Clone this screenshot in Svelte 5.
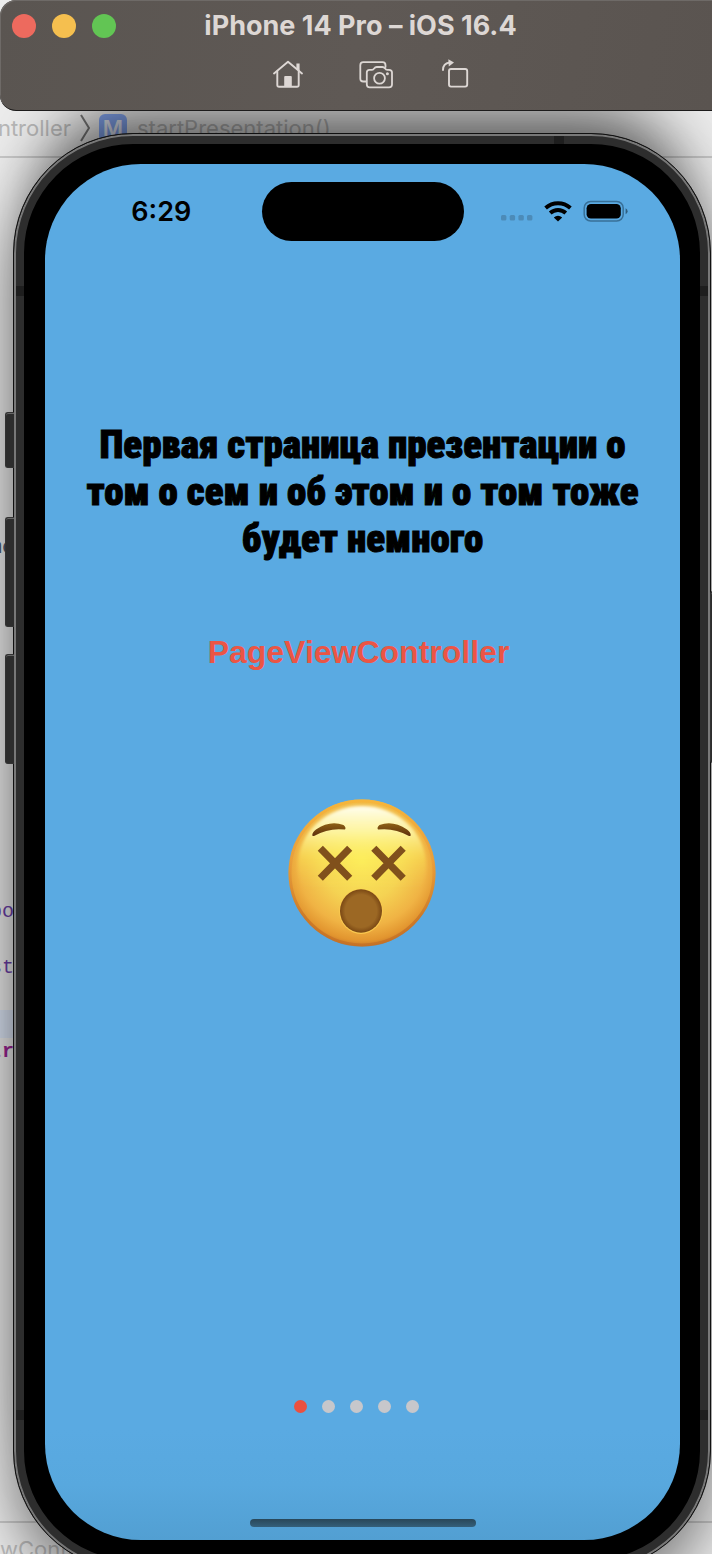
<script>
  const code = ['name', '', '', '', '', '', '', '', '', '', '', '', '', 'po', '', 'st', '', '', 'tr'];
  const kinds = { 0: 'plain', 13: 'type', 15: 'type', 17: 'current', 18: 'keyword' };
  let page = $state(0);
  const pages = [1, 2, 3, 4, 5];
</script>

<div class="desktop">
  <div class="editor" aria-hidden="true">
    <div class="pathbar">
      <span>ntroller</span>
      <svg width="10" height="28" viewBox="0 0 10 28"><path d="M1 1 L9 14 L1 27" fill="none" stroke="#777" stroke-width="2" /></svg>
      <span class="method">M</span>
      <span>startPresentation()</span>
    </div>
    <div class="code">
      {#each code as line, i}
        <div class="line {kinds[i] ?? ''}">{line}</div>
      {/each}
    </div>
    <div class="footer">wController</div>
  </div>

  <header class="titlebar">
    <div class="title-row">
      <div class="lights">
        <button class="red" aria-label="Close"></button>
        <button class="yellow" aria-label="Minimize"></button>
        <button class="green" aria-label="Zoom"></button>
      </div>
      <h1>iPhone 14 Pro – iOS 16.4</h1>
    </div>
    <nav class="tools">
      <button aria-label="Home">
        <svg width="34" height="34" viewBox="0 0 34 34" fill="none" stroke="#ddd7d4" stroke-width="1.9" stroke-linejoin="round" stroke-linecap="round">
          <path d="M3 16.5 L17 4.8 L31 16.5" />
          <path d="M6.3 14.5 V28 Q6.3 29.8 8.1 29.8 H25.9 Q27.7 29.8 27.7 28 V14.5" />
          <path d="M25.4 6.5 H28.6 V14 L25.4 11.4 Z" fill="#ddd7d4" stroke="none" />
          <path d="M13.2 30 V20 Q13.2 19 14.2 19 H19.8 Q20.8 19 20.8 20 V30 Z" fill="#ddd7d4" stroke="none" />
        </svg>
      </button>
      <button aria-label="Screenshot">
        <svg width="34" height="34" viewBox="0 0 34 34" fill="none" stroke="#ddd7d4" stroke-width="1.8" stroke-linejoin="round" stroke-linecap="round">
          <path d="M7 24.5 H4.3 Q1.3 24.5 1.3 21.5 V8.2 Q1.3 5.2 4.3 5.2 H23.5 Q26.5 5.2 26.5 8.2 V10" />
          <path d="M10.5 12.8 H13 Q14.4 12.8 15.2 11.4 Q16.1 10 17.8 10 H23.4 Q25 10 26 11.4 Q26.8 12.8 28.3 12.8 H30 Q33 12.8 33 15.6 V27.6 Q33 30.4 30 30.4 H10.7 Q7.8 30.4 7.8 27.6 V15.6 Q7.8 12.8 10.5 12.8 Z" />
          <circle cx="20.5" cy="21.2" r="5.4" />
          <circle cx="28.4" cy="16.8" r="1.5" fill="#ddd7d4" stroke="none" />
        </svg>
      </button>
      <button class="rotate" aria-label="Rotate">
        <svg width="34" height="34" viewBox="0 0 34 34" fill="none" stroke="#ddd7d4" stroke-width="1.9" stroke-linejoin="round" stroke-linecap="round">
          <rect x="10" y="12" width="18.2" height="17.6" rx="2" />
          <path d="M4 13 Q4 6.5 10.5 5.5" />
          <path d="M9.3 2.2 L15 5.5 L9.8 9.5 Z" fill="#ddd7d4" stroke="none" />
        </svg>
      </button>
    </nav>
  </header>

  <main class="device">
    <span class="key mute"></span>
    <span class="key up"></span>
    <span class="key down"></span>
    <span class="key power"></span>
    <span class="band top"></span>
    <span class="band left high"></span>
    <span class="band right high"></span>
    <span class="band left low"></span>
    <span class="band right low"></span>

    <div class="screen">
      <div class="status">
        <time>6:29</time>
        <span class="island"></span>
        <div class="signals">
          <svg width="32" height="24" viewBox="0 0 32 24" fill="#4c8bb8">
            <rect x="0" y="15" width="5.4" height="5.4" rx="1.5" />
            <rect x="8.7" y="15" width="5.4" height="5.4" rx="1.5" />
            <rect x="17.4" y="15" width="5.4" height="5.4" rx="1.5" />
            <rect x="26" y="15" width="5.4" height="5.4" rx="1.5" />
          </svg>
          <svg width="28" height="24" viewBox="0 0 28 24">
            <g fill="none" stroke="#000" stroke-width="3.9">
              <path d="M1.6 8 A18.5 18.5 0 0 1 26.4 8" />
              <path d="M6.2 13 A11.5 11.5 0 0 1 21.8 13" />
            </g>
            <path d="M14 21.6 L9.8 17.4 Q14 14 18.2 17.4 Z" />
          </svg>
          <svg width="46" height="24" viewBox="0 0 46 24">
            <rect x="1.2" y="1.5" width="39" height="19.5" rx="6.5" fill="none" stroke="#387098" stroke-width="1.5" />
            <rect x="3.6" y="3.9" width="34.2" height="14.7" rx="4.4" />
            <path d="M42.6 8.3 Q44.6 9.3 44.6 11.3 Q44.6 13.3 42.6 14.3 Z" fill="#2f5f80" />
          </svg>
        </div>
      </div>

      <section>
        <h2>Первая страница презентации о<br />том о сем и об этом и о том тоже<br />будет немного</h2>
        <p>PageViewController</p>
        <svg class="face" width="148" height="148" viewBox="0 0 148 148" role="img" aria-label="Dizzy face">
          <defs>
            <radialGradient id="base" cx=".5" cy=".42" r=".6">
              <stop offset="0" stop-color="#fbe95a" />
              <stop offset=".45" stop-color="#f5d353" />
              <stop offset=".74" stop-color="#f0b344" />
              <stop offset=".9" stop-color="#e2952f" />
              <stop offset="1" stop-color="#bd6b24" />
            </radialGradient>
            <linearGradient id="shine" x1="0" y1="0" x2="0" y2="1">
              <stop offset="0" stop-color="#fffef0" />
              <stop offset=".22" stop-color="#fffcb0" stop-opacity=".8" />
              <stop offset=".45" stop-color="#fff65c" stop-opacity=".35" />
              <stop offset=".7" stop-color="#fbe050" stop-opacity="0" />
            </linearGradient>
            <linearGradient id="rim" x1="0" y1="0" x2="0" y2="1">
              <stop offset="0" stop-color="#f6b53a" />
              <stop offset=".4" stop-color="#e8973a" stop-opacity=".5" />
              <stop offset=".8" stop-color="#c06a24" stop-opacity=".6" />
            </linearGradient>
            <radialGradient id="mouth">
              <stop offset=".75" stop-color="#9c6824" />
              <stop offset="1" stop-color="#7a4814" />
            </radialGradient>
            <linearGradient id="brow" x1="0" y1="0" x2="0" y2="1">
              <stop offset="0" stop-color="#8d6015" />
              <stop offset="1" stop-color="#5e2f0c" />
            </linearGradient>
            <filter id="soft"><feGaussianBlur stdDeviation="1.6" /></filter>
          </defs>
          <circle cx="74" cy="74" r="73.5" fill="url(#base)" />
          <circle cx="74" cy="74" r="72" fill="none" stroke="url(#rim)" stroke-width="3" />
          <ellipse cx="74" cy="66" rx="64" ry="59" fill="url(#shine)" filter="url(#soft)" />
          <g fill="url(#brow)">
            <path d="M24.3 36.5 Q24 33.5 28 30.5 Q42 21 55.5 26 Q58.5 28.5 57 30.6 Q41 28.5 26 37 Q25 37.2 24.3 36.5 Z" />
            <path d="M122.7 36.5 Q123 33.5 119 30.5 Q105 21 91.5 26 Q88.5 28.5 90 30.6 Q106 28.5 121 37 Q122 37.2 122.7 36.5 Z" />
          </g>
          <g fill="none" stroke="#80501c" stroke-width="7.2">
            <path d="M32.3 49.3 L61.7 79.2 M61.7 49.3 L32.3 79.2" />
            <path d="M85.8 49.3 L115.2 79.2 M115.2 49.3 L85.8 79.2" />
          </g>
          <ellipse cx="73" cy="112.5" rx="21.8" ry="22.4" fill="#fbc950" />
          <ellipse cx="73" cy="112" rx="21" ry="21.7" fill="url(#mouth)" />
        </svg>
      </section>

      <div class="dots">
        {#each pages as n, i}
          <button class:active={page === i} aria-label="Page {n}" onclick={() => (page = i)}></button>
        {/each}
      </div>
      <span class="home"></span>
    </div>
  </main>
</div>

<style>
  :global(body) { margin: 0; }
  button { appearance: none; border: 0; padding: 0; background: none; }
  svg { display: block; }

  .desktop {
    position: relative;
    display: flex;
    flex-direction: column;
    height: 100vh;
    overflow: hidden;
    background: #ececec;
    font-family: Inter, sans-serif;
  }

  .editor {
    position: absolute;
    inset: 0;
    display: flex;
    flex-direction: column;
    color: #b8b8b8;
    font-size: 22px;
  }
  .pathbar {
    display: flex;
    align-items: flex-end;
    gap: 9px;
    box-sizing: border-box;
    height: 158px;
    padding-bottom: 14px;
    border-bottom: 2px solid #c8c8c8;
    line-height: 28px;
  }
  .pathbar span:first-child { display: flex; justify-content: flex-end; width: 71px; }
  .method {
    width: 28px;
    margin-right: 1px;
    border-radius: 6px;
    background: #86a8f4;
    color: #e8ecf8;
    font-weight: 600;
    text-align: center;
  }
  .code {
    flex: 1;
    padding-top: 376px;
    font: 20px/28px "Liberation Mono", monospace;
  }
  .line { display: flex; justify-content: flex-end; width: 14px; height: 28px; }
  .plain { color: #4c5a70; }
  .type { color: #6c40a8; }
  .keyword { color: #9b2393; font-weight: 700; }
  .current { background: #dbe4f4; }
  .footer {
    height: 31px;
    border-top: 2px solid #c8c8c8;
    line-height: 52px;
    color: #bcbcbc;
  }

  .titlebar {
    position: relative;
    z-index: 1;
    flex: none;
    box-sizing: border-box;
    height: 111px;
    border: 1px solid #1c1b1b;
    border-width: 0 0 1px;
    border-radius: 16px 0 0 16px;
    background: linear-gradient(100deg, #5a5551, #5f5955 50%, #5a5450);
    box-shadow: inset 1px 1px 0 #6e6a67;
  }
  .title-row {
    display: grid;
    grid-template-columns: 1fr auto 1fr;
    align-items: center;
    height: 52px;
    padding: 0 0 0 12px;
  }
  .lights { display: flex; gap: 16px; }
  .lights button { width: 24px; height: 24px; border-radius: 50%; }
  .red { background: #ed6a5e; }
  .yellow { background: #f5bf4f; }
  .green { background: #62c554; }
  h1 { margin: 0 3px 0 0; color: #ddd7d4; font-size: 27px; font-weight: 700; line-height: 50px; }
  .tools { display: flex; justify-content: center; gap: 54px; padding: 5px 0 0 32px; }
  .rotate { margin-left: -8px; }

  .device {
    position: relative;
    display: flex;
    flex: none;
    box-sizing: border-box;
    height: calc(100vh - 116px);
    margin: 22px 1px 0 13px;
    padding: 30px 30px 30px 31px;
    border: 1px solid #111;
    border-radius: 120px;
    background: #000;
    box-shadow:
      inset 0 0 0 2px #787878,
      inset 0 0 0 10px #2d2d2d,
      0 24px 60px rgba(0, 0, 0, .5),
      0 -60px 60px -30px rgba(0, 0, 0, .5);
  }
  .key {
    position: absolute;
    left: -9px;
    box-sizing: border-box;
    width: 9px;
    border: 1px solid #333;
    border-right: 0;
    border-radius: 3px 0 0 3px;
    background: #2d2d2d;
    box-shadow: inset 0 1px 0 #666;
  }
  .mute { top: 278px; height: 56px; }
  .up { top: 383px; height: 110px; }
  .down { top: 520px; height: 110px; }
  .power { top: 457px; right: -9px; left: auto; height: 172px; }
  .band { position: absolute; background: #1e1e1e; }
  .band.top { top: 2px; right: 146px; width: 10px; height: 8px; }
  .band.left { left: 2px; width: 8px; height: 10px; }
  .band.right { right: 2px; width: 8px; height: 10px; }
  .high { top: 152px; }
  .low { top: 1276px; }

  .screen {
    display: flex;
    flex: 1;
    flex-direction: column;
    align-items: center;
    border-radius: 96px;
    background: linear-gradient(#5aaae2, #5aaae2 92%, #58a8de 96%, #529fd2);
    overflow: hidden;
  }
  .status {
    display: grid;
    grid-template-columns: 1fr auto 1fr;
    align-items: center;
    width: 100%;
    padding-top: 18px;
  }
  time { padding-left: 16px; font-size: 27px; font-weight: 600; text-align: center; }
  .island { width: 202px; height: 59px; border-radius: 30px; background: #000; }
  .signals { display: flex; gap: 11px; padding-left: 37px; }

  section {
    display: flex;
    flex-direction: column;
    align-items: center;
    padding-top: 181px;
  }
  h2 {
    margin: 0;
    font-family: Impact, "Roboto Condensed", Roboto, sans-serif;
    font-size: 39px;
    font-weight: 900;
    line-height: 47px;
    text-align: center;
    white-space: nowrap;
    -webkit-text-stroke: 1px #000;
  }
  p {
    margin: 69px 0 0;
    padding-right: 8px;
    color: #eb5545;
    font: 700 32px/40px "Liberation Sans", Arial, sans-serif;
  }
  .face { margin-top: 127px; }
  .dots { display: flex; gap: 15px; margin-top: auto; padding-right: 13px; }
  .dots button { width: 13px; height: 13px; border-radius: 50%; background: #c7c7cb; }
  .dots .active { background: #eb5040; }
  .home {
    width: 226px;
    height: 8px;
    margin: 106px 0 13px;
    border-radius: 4px;
    background: linear-gradient(#294759, #345f7a);
  }
</style>
